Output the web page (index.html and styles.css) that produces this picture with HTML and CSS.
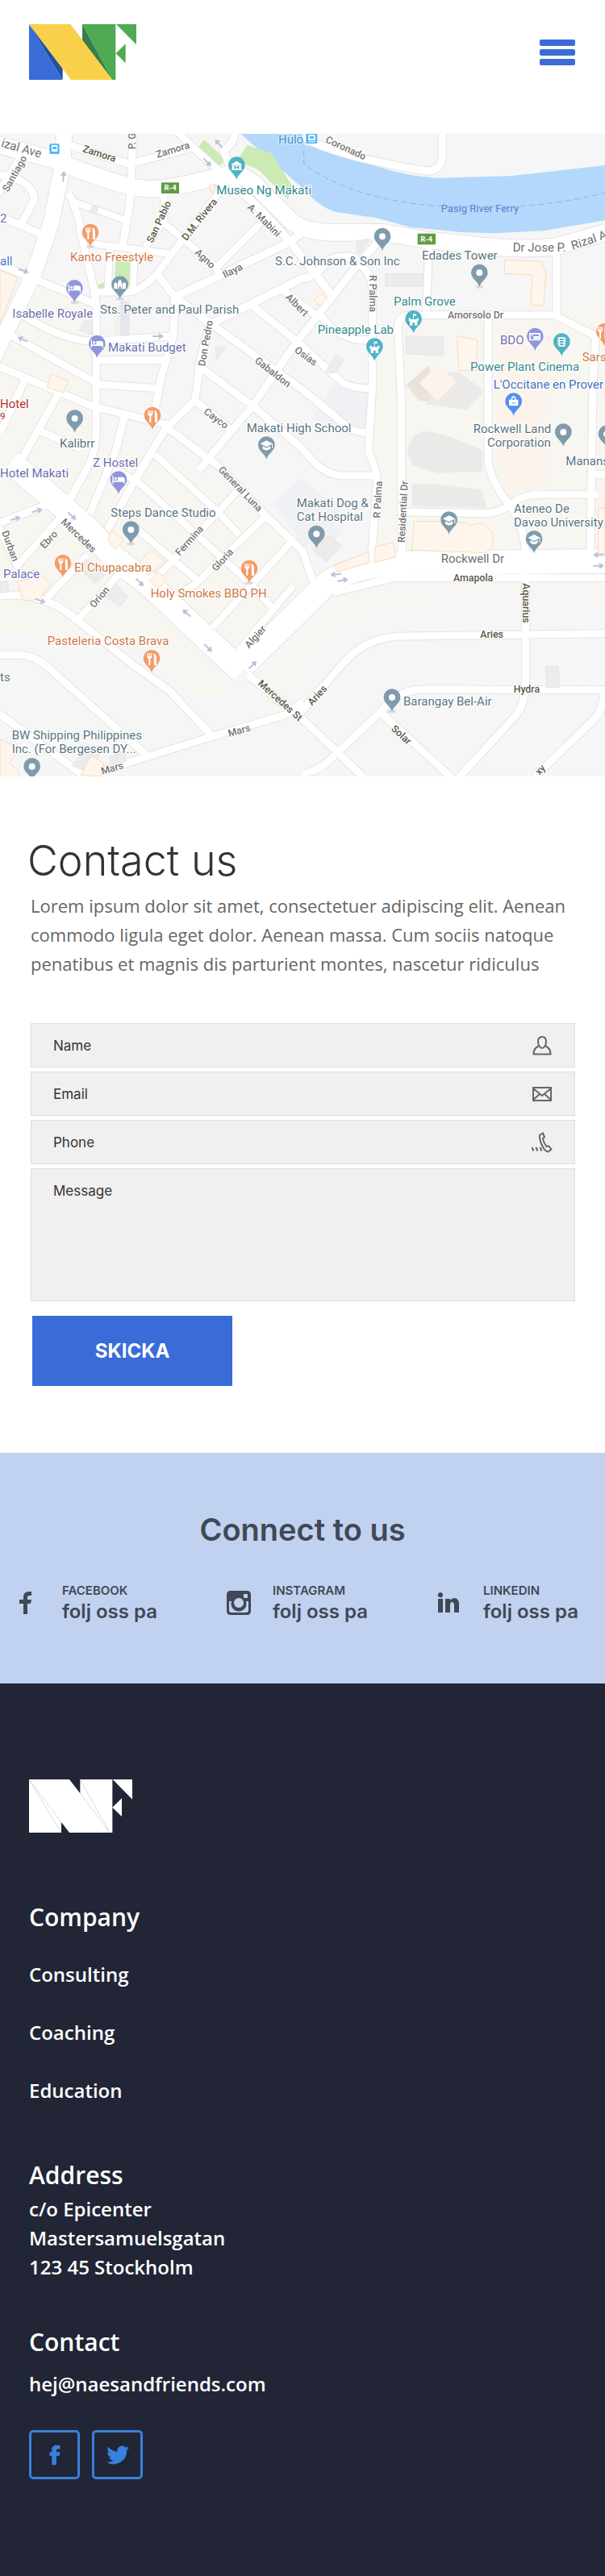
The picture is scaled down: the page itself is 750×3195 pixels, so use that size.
FILE: index.html
```html
<!DOCTYPE html>
<html lang="en">
<head>
<meta charset="utf-8">
<meta name="viewport" content="width=device-width, initial-scale=1">
<title>Contact us</title>
<link rel="stylesheet" href="styles.css">
</head>
<body>
<header class="header">
  <a class="logo" href="#" aria-label="Home">
    <svg viewBox="0 0 399 207" width="133" height="69">
      <path fill="#3a6cd8" d="M0 0v207h125z"/>
      <path fill="#22509c" d="M0 0l125 207v-42z"/>
      <path fill="#387d4a" d="M198 0v60l112 147z"/>
      <path fill="#4eaa53" d="M198 0h124v207h-13z"/>
      <path fill="#f8d049" d="M0 0h154l156 207h-154z"/>
      <path fill="#4eaa53" d="M324 0h75v76zM323 109l36-36v72z"/>
    </svg>
  </a>
  <button class="menu" type="button" aria-label="Menu"><span class="bar"></span><span class="bar"></span><span class="bar"></span></button>
</header>

<main>
<svg class="map" viewBox="0 18 2250 2391" role="img" aria-label="Map">
  <defs>
    <g id="roads">
      <path class="w60" d="M-20 55L200 115Q400 195 500 217Q580 232 680 208L870 165Q930 180 980 240L1080 340Q1130 385 1250 385L1425 385L1600 415L1850 440Q2020 450 2090 432L2250 385"/>
      <path class="w56" d="M240 0L232 140L190 350L125 540L30 740L-30 860"/>
      <path class="w28" d="M255 240Q290 300 300 380L350 600Q360 650 358 740L357 1150Q350 1220 320 1270L255 1385"/>
      <path class="w28" d="M495 0L490 130L482 280L455 445M240 55L480 130L710 70M650 0L720 70L840 180M870 0Q880 50 830 80L870 165"/>
      <path class="w24" d="M270 270L470 340M330 425L640 465M410 440L400 610M500 450L495 600"/>
      <path class="w26" d="M610 240V340L540 440M850 190L680 410L590 530Q530 600 480 607H360M610 350L800 510L820 550M800 520L970 350"/>
      <path class="w32" d="M650 625L1080 420L1130 380M860 200L960 290L1080 420L1235 620M650 625L785 725L1125 555Q1160 560 1220 490Q1290 460 1330 490"/>
      <path class="w28" d="M585 540L650 625L645 760Q630 830 600 920L570 1080M785 720Q740 850 738 920L725 1010L620 1110L545 1230L400 1490M785 725L1125 970L1300 1115Q1330 1130 1380 1130M750 890L940 1030L1125 1190Q1200 1290 1275 1290H1395"/>
      <path class="w28" d="M725 1010L860 1120M1415 410L1325 510L1185 690L1090 810L940 1030L780 1220L740 1270M620 1110L820 1260L980 1430L1125 1570L1170 1700M930 650L1110 795L1270 940Q1300 965 1380 965M1040 590L1170 690M1190 690Q1260 790 1370 785"/>
      <path class="w28" d="M0 170Q120 190 128 260L80 355M85 90L-20 260M0 325L150 390M0 505L110 550L350 650M80 690Q240 790 350 790L640 770M0 745L350 940M350 860H610M360 950L590 965M0 885L340 1030L620 1100M95 930L0 1130M220 980L80 1230M140 1120L300 1190M465 1060L430 1200L335 1430M560 1210L500 1310M430 1270L510 1310"/>
      <path class="w28" d="M1125 30Q1250 100 1560 152Q1640 170 1645 100V0M1310 490Q1385 520 1385 600V960L1370 1200Q1410 1280 1400 1340L1380 1620"/>
      <path class="w28" d="M1595 430L1585 690M2070 440V690M2250 1285H2205M1495 1620L1492 1000L1480 740Q1480 693 1530 692H2060L2215 770L2205 960L2195 1600M1815 700V1210Q1810 1290 1895 1400Q1955 1480 1955 1600M1510 1425L1800 1430Q1850 1430 1895 1400Q1940 1360 2010 1360H2250"/>
      <path class="w92" d="M40 1240L210 1385L330 1490L420 1590L560 1700L900 2020"/>
      <path class="w92" d="M900 2000L1125 1780L1215 1690Q1300 1630 1480 1615L2250 1608"/>
      <path class="w28" d="M1240 1725L1465 1670H2250M1955 1650V2060Q1955 2130 1920 2180L1700 2420M1110 2180L1275 1990Q1350 1900 1475 1888L2250 1877M310 2410L790 2260L1060 2180L1125 2130M920 2030L1125 2195L1350 2410M1125 2400Q1190 2390 1255 2320L1415 2170Q1480 2085 1575 2085L2250 2087M1415 2170L1685 2420M2245 2100Q2240 2160 2215 2190L1990 2410"/>
      <path class="w26" d="M575 1210L800 1415L890 1510M510 1310L930 1690L1020 1790M500 1480L735 1680M880 1350L640 1610L560 1690M990 1440L725 1695L650 1740M1080 1540L790 1855M1090 1700L880 1950"/>
      <path class="w26" d="M-5 1480L65 1630M220 1450L60 1630M325 1585L160 1760M440 1660L290 1825"/>
      <path class="w28" d="M0 1735H80Q200 1750 290 1830L490 1990L630 2090L790 2260M0 1957H80Q140 1960 220 2040L545 2330M0 2178L330 2420M0 1465L170 1400"/>
    </g>
    <path id="pin" d="M0 0C-5-22-31-30-31-54a31 31 0 0 1 62 0C31-30 5-22 0 0z"/>
    <path id="fork" d="M-17-72v12q0 8 6 8v24h6v-24q6 0 6-8v-12h-4v11h-3v-11h-4v11h-3v-11zM8-72q10 3 10 22v22H9z"/>
    <circle id="dot" cy="-53" r="12"/>
    <path id="bed" d="M-23-68h4v18h16v-13h17q9 0 9 9v16h-4v-7h-38v7h-4zM-11-62a5 5 0 1 1-.1 0z"/>
    <path id="cap" d="M-23-58L0-70l23 12L0-46zM-14-49v10q14 11 28 0v-10L0-42zM20-57h3v16h-3z"/>
    <path id="fort" d="M-18-57h6v5h24v-5h6v11h-4v17H4v-10h-8v10h-10v-17h-4zM-2-72h12v7H1v10h-3z"/>
    <path id="arrow" d="M-20-3H3v-9L21 0 3 12V3h-23z"/>
  </defs>
  <rect class="land" y="18" width="2250" height="2391"/>
  <g class="beige">
    <path d="M140 580L355 670V1200L0 1400V760zM1380 970L1480 690L2250 640V1600H1380zM0 1200L600 1200L1100 1540L1125 1780L900 2010L0 1860z"/>
    <path d="M420 1680L900 2090L700 2120zM1250 1740L1465 1700H2250V1740H1600L1300 1830L1000 2160L960 2030z"/>
  </g>
  <path class="hospital" d="M1160 1080L1250 940L1365 980V1110L1290 1120zM1120 1300L1270 1420L1130 1560L1020 1390zM1125 1500L1200 1420L1270 1500L1180 1600z"/>
  <path class="water" d="M895 18H1125L1135 60Q1180 65 1240 92L1375 130Q1500 175 1625 182L1900 175L2250 135V340L2025 378L1845 388L1725 385L1525 365L1395 330L1255 310Q1190 295 1125 220z"/>
  <path class="ferry" d="M1130 80V130Q1300 260 1630 287H1940Q2100 275 2250 238"/>
  <path class="park" d="M920 60L1010 90L1085 210L1070 262L960 150L880 120zM760 40L845 120L810 137L735 70zM430 470h56v115h-60zM365 580l24-10v25h-24z"/>
  <g>
    <use href="#roads" class="casing"/>
    <use href="#roads" class="fill"/>
  </g>
  <g class="grey">
    <path d="M1433 538h140v48h-140zM1510 770l137 5 2 68-140-6zM1210 905l40-65 30 20-35 48zM1328 415l50-7-40 57-10-5zM345 283l20 8-8 27-22-8zM295 750l15-35 35-5v55zM800 810l38 5-32 43z"/>
    <path class="shade" d="M1580 900l130 5 90 70-60 70-150-20zM1515 1205q10-85 80-80l80 20 120 50v80l-170 5-90-30zM1530 1322l80-2 180 20 20 70-275-5z"/>
    <path d="M320 1600l70 60-40 30-60-60zM430 1690l45 50-30 38-55-40zM1170 1570l55-60 45 40-55 60zM2030 2000h47l4 78h-50zM410 2335l55-20 5 40-60 15zM0 1685l28-2 5 40-33 3zM270 2370l40-60 60 20-50 60z"/>
  </g>
  <path class="tower-side" d="M1510 952l85-73 10 60-10 75-40-5z"/>
  <path class="tower" d="M1558 945l75-68 64 65-70 70z"/>
  <path class="church" d="M425 655h35v115h-35z"/><path class="church-side" d="M447 640h35v130h-35z"/>
  <g class="building">
    <path d="M1877 487l140 7v22l14 3-9 138-48-3 6-111-104-5zM1700 770l75 15-2 115-67-2zM1165 640l30-28 20 20-24 26zM0 525l65 30-65 170zM190 910l64 27-18 45-61-20zM778 210l25-4-15 34z"/>
    <path class="mall" d="M1857 740h130l80 60-2 170-38 20v360l-130-10-20-20-20-110zM2225 1320l25-20v110h-25z"/>
    <path d="M1540 1460h75l110 5 30 10 40-10 40 40-8 60-25 12-270-10zM1240 1625l130-52 5 40-120 35zM1395 1555l67-17 10 55-80 20zM2225 1410h25v170h-25z"/>
    <path d="M65 1685l60-15v-30l65 50-45 60-60 5zM415 1495l45 35-30 35-30-35zM560 1565l55 45-65 50-30-50zM590 1650l30 28-32 32-33-30zM0 2270l70 35-35 55 35 30v20H0zM300 2405l40-75 45 30-10 49z"/>
  </g>
  <g class="arrows">
    <use href="#arrow" transform="translate(236 177) rotate(-85)"/><use href="#arrow" transform="translate(88 528) rotate(20)"/><use href="#arrow" transform="translate(84 783) rotate(205)"/><use href="#arrow" transform="translate(588 771)"/><use href="#arrow" transform="translate(771 124) rotate(45)"/><use href="#arrow" transform="translate(813 54) rotate(230)"/><use href="#arrow" transform="translate(57 1450) rotate(-18)"/><use href="#arrow" transform="translate(138 1420) rotate(-18)"/><use href="#arrow" transform="translate(268 1440) rotate(42)"/><use href="#arrow" transform="translate(150 1755) rotate(20)"/><use href="#arrow" transform="translate(520 1687) rotate(45)"/><use href="#arrow" transform="translate(694 1801) rotate(222)"/><use href="#arrow" transform="translate(774 1931) rotate(45)"/><use href="#arrow" transform="translate(940 1994) rotate(-45)"/><use href="#arrow" transform="translate(1249 1657) rotate(175)"/><use href="#arrow" transform="translate(1275 1679) rotate(-12)"/><use href="#arrow" transform="translate(2226 1585) rotate(180)"/><use href="#arrow" transform="translate(2226 1625)"/>
  </g>
  <g class="street">
    <text class="avenue" transform="translate(2 65) rotate(16)">izal Ave</text>
    <text transform="translate(30 236) rotate(-61)">Santiago</text>
    <text transform="translate(585 108) rotate(-17)">Zamora</text>
    <text transform="translate(504 76) rotate(-90)">P. G</text>
    <text transform="translate(918 293) rotate(45)">A. Mabini</text>
    <text transform="translate(722 462) rotate(43)">Agno</text>
    <text transform="translate(836 556) rotate(-27)">Ilaya</text>
    <text transform="translate(762 884) rotate(-80)">Don Pedro</text>
    <text transform="translate(945 866) rotate(38)">Gabaldon</text>
    <text transform="translate(755 1057) rotate(36)">Cayco</text>
    <text transform="translate(1060 628) rotate(45)">Albert</text>
    <text transform="translate(1093 828) rotate(36)">Osias</text>
    <text transform="translate(1208 48) rotate(25)">Coronado</text>
    <text transform="translate(1374 543) rotate(90)">R Palma</text>
    <text x="1665" y="705">Amorsolo Dr</text>
    <text class="avenue" x="1907" y="455">Dr Jose P.</text>
    <text class="avenue" transform="translate(2130 450) rotate(-19)">Rizal A</text>
    <text transform="translate(810 1270) rotate(46)">General Luna</text>
    <text transform="translate(225 1465) rotate(44)">Mercedes</text>
    <text transform="translate(165 1564) rotate(-47)">Ebro</text>
    <text transform="translate(6 1500) rotate(70)">Durban</text>
    <text transform="translate(350 1784) rotate(-49)">Orion</text>
    <text transform="translate(668 1590) rotate(-48)">Fermina</text>
    <text transform="translate(804 1648) rotate(-48)">Gloria</text>
    <text transform="translate(926 1934) rotate(-48)">Algier</text>
    <text transform="translate(852 2262) rotate(-16)">Mars</text>
    <text transform="translate(380 2402) rotate(-16)">Mars</text>
    <text transform="translate(1414 1448) rotate(-87)">R Palma</text>
    <text transform="translate(1505 1540) rotate(-87)">Residential Dr</text>
    <text class="avenue" x="1640" y="1614">Rockwell Dr</text>
  </g>
  <g class="street street-dark">
    <text transform="translate(305 84) rotate(18)">Zamora</text>
    <text transform="translate(567 426) rotate(-65)">San Pablo</text>
    <text transform="translate(694 418) rotate(-52)">D.M. Rivera</text>
    <text x="1686" y="1683">Amapola</text>
    <text transform="translate(1944 1690) rotate(90)">Aquarius</text>
    <text x="1786" y="1893">Aries</text><text x="1910" y="2098">Hydra</text>
    <text transform="translate(1160 2147) rotate(-47)">Aries</text>
    <text transform="translate(1453 2234) rotate(43)">Solar</text>
    <text transform="translate(957 2066) rotate(42)">Mercedes St</text>
    <text transform="translate(2006 2406) rotate(-48)">xy</text>
  </g>
  <text class="ferry-label" x="1640" y="308">Pasig River Ferry</text>
  <g class="shield">
    <rect x="600" y="199" width="66" height="41"/><rect x="1553" y="389" width="67" height="41"/>
    <text x="633" y="229">R-4</text><text x="1586" y="419">R-4</text>
  </g>
  <g class="place slate">
    <text x="372" y="686">Sts. Peter and Paul Parish</text><text x="222" y="1184">Kalibrr</text>
    <text x="917" y="1128">Makati High School</text><text x="1023" y="507">S.C. Johnson &amp; Son Inc</text>
    <text x="1569" y="486">Edades Tower</text><text x="1760" y="1131">Rockwell Land</text><text x="1812" y="1182">Corporation</text>
    <text x="412" y="1442">Steps Dance Studio</text><text x="1103" y="1407">Makati Dog &amp;</text><text x="1103" y="1458">Cat Hospital</text>
    <text x="1911" y="1427">Ateneo De</text><text x="1911" y="1478">Davao University</text><text x="2104" y="1252">Manans</text>
    <text x="1500" y="2146">Barangay Bel-Air</text><text x="44" y="2272">BW Shipping Philippines</text><text x="44" y="2323">Inc. (For Bergesen DY...</text><text x="0" y="2054">ts</text>
  </g>
  <g class="place purple">
    <text x="46" y="702">Isabelle Royale</text><text x="402" y="828">Makati Budget</text><text x="345" y="1257">Z Hostel</text>
    <text x="0" y="1297">Hotel Makati</text><text x="12" y="1672">Palace</text><text x="1860" y="800">BDO</text><text x="0" y="347">2</text>
  </g>
  <g class="place orange">
    <text x="261" y="493">Kanto Freestyle</text><text x="276" y="1647">El Chupacabra</text><text x="560" y="1743">Holy Smokes BBQ PH</text>
    <text x="176" y="1921">Pasteleria Costa Brava</text><text x="2165" y="864">Sars</text>
  </g>
  <g class="place teal">
    <text x="805" y="243">Museo Ng Makati</text><text x="1464" y="658">Palm Grove</text><text x="1181" y="762">Pineapple Lab</text><text x="1749" y="900">Power Plant Cinema</text>
  </g>
  <g class="place blue"><text x="1835" y="965">L'Occitane en Prover</text><text x="0" y="507">all</text></g>
  <g class="place red"><text x="0" y="1038">Hotel</text><text class="small" x="0" y="1080">9</text></g>
  <text class="place transit" x="1035" y="53">Hulo</text>
  <g class="stop">
    <rect x="184" y="55" width="37" height="38" rx="5"/><rect x="1138" y="16" width="42" height="38" rx="5"/>
    <path d="M192 64q0-4 4-4h14q4 0 4 4v20h-22zm4 2v9h14v-9zM1147 22h25v20h-25zm5 5v9h15v-9zM1145 46h28v3h-28z"/>
  </g>
  <g class="shadows">
    <ellipse cx="336" cy="437" rx="15" ry="6"/><ellipse cx="278" cy="646" rx="15" ry="6"/><ellipse cx="446" cy="632" rx="15" ry="6"/><ellipse cx="1783" cy="587" rx="15" ry="6"/><ellipse cx="1458" cy="2167" rx="15" ry="6"/><ellipse cx="487" cy="1544" rx="15" ry="6"/><ellipse cx="927" cy="1689" rx="15" ry="6"/>
  </g>
  <g class="pin-slate">
    <use href="#pin" x="446" y="632"/><use href="#pin" x="278" y="1130"/><use href="#pin" x="991" y="1229"/><use href="#pin" x="1422" y="453"/><use href="#pin" x="1783" y="588"/><use href="#pin" x="2095" y="1181"/><use href="#pin" x="2256" y="1188"/><use href="#pin" x="487" y="1544"/><use href="#pin" x="1177" y="1560"/><use href="#pin" x="1670" y="1508"/><use href="#pin" x="1986" y="1579"/><use href="#pin" x="1458" y="2168"/><use href="#pin" x="119" y="2425"/>
  </g>
  <g class="pin-orange"><use href="#pin" x="336" y="438"/><use href="#pin" x="567" y="1119"/><use href="#pin" x="234" y="1669"/><use href="#pin" x="927" y="1689"/><use href="#pin" x="564" y="2023"/><use href="#pin" x="2248" y="808"/></g>
  <g class="pin-purple"><use href="#pin" x="277" y="646"/><use href="#pin" x="361" y="852"/><use href="#pin" x="441" y="1358"/><use href="#pin" x="1990" y="825"/></g>
  <g class="pin-teal"><use href="#pin" x="880" y="188"/><use href="#pin" x="1538" y="760"/><use href="#pin" x="1393" y="863"/><use href="#pin" x="2089" y="845"/></g>
  <g class="pin-blue"><use href="#pin" x="1910" y="1067"/></g>
  <g class="glyph">
    <use href="#dot" x="278" y="1130"/><use href="#dot" x="1422" y="453"/><use href="#dot" x="1783" y="588"/><use href="#dot" x="2095" y="1181"/><use href="#dot" x="2256" y="1188"/><use href="#dot" x="487" y="1544"/><use href="#dot" x="1177" y="1560"/><use href="#dot" x="1458" y="2168"/><use href="#dot" x="119" y="2425"/>
    <use href="#fork" x="336" y="438"/><use href="#fork" x="567" y="1119"/><use href="#fork" x="234" y="1669"/><use href="#fork" x="927" y="1689"/><use href="#fork" x="564" y="2023"/><use href="#fork" x="2240" y="808"/>
    <use href="#bed" x="277" y="646"/><use href="#bed" x="361" y="852"/><use href="#bed" x="441" y="1358"/>
    <use href="#cap" x="991" y="1229"/><use href="#cap" x="1670" y="1508"/><use href="#cap" x="1986" y="1579"/>
    <use href="#fort" x="1538" y="760"/><use href="#fort" x="1393" y="863"/>
    <path d="M861 131l19-12 19 12v3h-38zM863 136h34v13h3v4h-40v-4h3z"/>
    <path d="M446 559q9 9 8 18v18h-5v-9h-6v9h-5v-18q-1-9 8-18zM424 576l6-7 6 7v19h-12zM456 576l6-7 6 7v19h-12z"/>
    <path fill-rule="evenodd" d="M1968 759h42v28h-42zm5 5v18h32v-18z"/><path d="M1976 766h5v5h-5zM1984 771h20v10h-20z"/>
    <path d="M2077 775h24v34h-24zM2073 777h3v5h-3zM2073 787h3v5h-3zM2073 797h3v5h-3zM2102 777h3v5h-3zM2102 787h3v5h-3zM2102 797h3v5h-3z"/>
    <path fill-rule="evenodd" d="M1893 1007h8q0-13 9-13t9 13h8v23h-34zm12 0h10q0-8-5-8t-5 8zm-2 10q7 10 14 0h-3q-4 5-8 0z"/>
  </g>
  <g class="pin-mark"><path d="M871 149v-12h4l5 6 5-6h4v12h-4v-6l-5 5-5-5v6z"/><path d="M2082 780h14v6h-14zM2082 789h14v6h-14zM2082 798h14v6h-14z"/></g>
</svg>

<section class="contact">
  <h1 class="contact-title">Contact us</h1>
  <p class="contact-text">Lorem ipsum dolor sit amet, consectetuer adipiscing elit. Aenean commodo ligula eget dolor. Aenean massa. Cum sociis natoque penatibus et magnis dis parturient montes, nascetur ridiculus</p>
  <form class="form">
    <div class="field">
      <input class="control" type="text" placeholder="Name" aria-label="Name">
      <svg class="field-icon" viewBox="0 0 28 28"><path d="M14 3c-3.500 0-5 2.500-5 6s2 8 5 8 5-4.500 5-8-1.500-6-5-6zM9.500 14.500C6 16 3.500 19 3.500 24.500h21C24.500 19 22 16 18.500 14.500"/></svg>
    </div>
    <div class="field">
      <input class="control" type="email" placeholder="Email" aria-label="Email">
      <svg class="field-icon" viewBox="0 0 28 28"><path d="M3 6h22v16H3zM3 7l11 9 11-9M3 21l8-7M25 21l-8-7"/></svg>
    </div>
    <div class="field">
      <input class="control" type="tel" placeholder="Phone" aria-label="Phone">
      <svg class="field-icon" viewBox="0 0 28 28"><path d="M11 5l4-2.500 2 4.500-2 2c.5 4 2 7 4.500 10l3-.500 3 4-4 3c-5 0-11-13-10.500-20.500zM1.500 20l2 4.500M6.500 20l2 4.500M11.500 20l2 4.500"/></svg>
    </div>
    <textarea class="control message" placeholder="Message" aria-label="Message"></textarea>
    <button class="send" type="submit">SKICKA</button>
  </form>
</section>

<section class="connect">
  <h2 class="connect-title">Connect to us</h2>
  <div class="networks">
    <a class="network" href="#">
      <svg class="network-icon" viewBox="0 0 30 30"><path d="M9 29V16H4v-5h5V8q0-7 7-7h3v5h-3q-2 0-2 2v3h5l-1 5h-4v13z"/></svg>
      <span class="network-text"><span class="network-name">FACEBOOK</span><span class="network-call">folj oss pa</span></span>
    </a>
    <a class="network" href="#">
      <svg class="network-icon" viewBox="0 0 30 30"><path fill-rule="evenodd" d="M5 0h20q5 0 5 5v20q0 5-5 5H5q-5 0-5-5V5q0-5 5-5zM22 4q-1 0-1 1v3q0 1 1 1h3q1 0 1-1V5q0-1-1-1zM3 13v11q0 3 3 3h18q3 0 3-3V13h-3a9.500 9.500 0 1 1-18 0zM15 9a6 6 0 1 0 .1 0z"/></svg>
      <span class="network-text"><span class="network-name">INSTAGRAM</span><span class="network-call">folj oss pa</span></span>
    </a>
    <a class="network" href="#">
      <svg class="network-icon" viewBox="0 0 30 30"><path d="M1 10h6v17H1zM4 2a3.200 3.200 0 1 1-.1 0zM10 10h6v2q2-3 5-3 6 0 6 8v10h-6v-9q0-4-2.500-4T16 18v9h-6z"/></svg>
      <span class="network-text"><span class="network-name">LINKEDIN</span><span class="network-call">folj oss pa</span></span>
    </a>
  </div>
</section>
</main>

<footer class="footer">
  <a class="footer-logo" href="#" aria-label="Home">
    <svg viewBox="0 0 384 198" width="128" height="66">
      <path fill="#fff" d="M0 0h150l40 52V0h120v198H150l-30-39v39H0zM311 0h73v74zM310 104l35-34v68z"/>
      <path fill="none" stroke="#c9c9c9" stroke-width="2" d="M120 198L0 0l120 159M190 52l110 146L190 0"/>
    </svg>
  </a>
  <nav class="company">
    <h2 class="footer-title">Company</h2>
    <a class="footer-link" href="#">Consulting</a>
    <a class="footer-link" href="#">Coaching</a>
    <a class="footer-link" href="#">Education</a>
  </nav>
  <section class="address">
    <h2 class="footer-title">Address</h2>
    <address class="lines">c/o Epicenter<br>Mastersamuelsgatan<br>123 45 Stockholm</address>
  </section>
  <section class="mail">
    <h2 class="footer-title">Contact</h2>
    <a class="footer-link" href="mailto:hej@naesandfriends.com">hej@naesandfriends.com</a>
  </section>
  <div class="social">
    <a class="social-link" href="#" aria-label="Facebook"><svg viewBox="0 0 30 30" width="28" height="28"><path d="M11 28V16H8v-5h3V8q0-6 6-6h5v5h-3q-2 0-2 2v2h5l-1 5h-4v12z"/></svg></a>
    <a class="social-link" href="#" aria-label="Twitter"><svg viewBox="0 0 24 24" width="28" height="28"><path d="M24 4.600a10 10 0 0 1-2.800.8 5 5 0 0 0 2.100-2.700 10 10 0 0 1-3.100 1.200 4.900 4.900 0 0 0-8.400 4.500A14 14 0 0 1 1.700 3.200a4.900 4.900 0 0 0 1.500 6.500 4.900 4.900 0 0 1-2.200-.6 4.900 4.900 0 0 0 3.900 4.900 5 5 0 0 1-2.200.1 4.900 4.900 0 0 0 4.600 3.400A10 10 0 0 1 0 19.500a14 14 0 0 0 21.500-12.400A10 10 0 0 0 24 4.600z"/></svg></a>
  </div>
</footer>
</body>
</html>
```
FILE: styles.css
```css
* { box-sizing: border-box; }
body { margin: 0; background: #fff; font-family: "Open Sans", "Noto Sans", sans-serif; color: #666; }
h1, h2, p { margin: 0; }
a { color: inherit; text-decoration: none; }
svg { display: block; }
button, input, textarea { font: inherit; }

.header { display: flex; justify-content: space-between; align-items: flex-start; padding: 30px 37px 67px 36px; }
.menu { display: flex; flex-direction: column; gap: 4px; margin-top: 19px; padding: 0; border: 0; background: none; cursor: pointer; }
.bar { width: 44px; height: 8px; border-radius: 2px; background: #3a6cd8; }

.map { width: 100%; height: auto; font-family: Roboto, sans-serif; }
.land { fill: #f6f6f6; }
.beige { fill: #f8f6f1; }
.hospital { fill: #f0f1f4; }
.water { fill: #b3d8fc; }
.park { fill: #cbeab4; }
.ferry { fill: none; stroke: #8fb4e6; stroke-width: 3; stroke-dasharray: 22 12; }
#roads { fill: none; stroke-linejoin: round; }
#roads path { stroke-width: calc((var(--road) + var(--edge)) * 1px); }
.w24 { --road: 24; }
.w26 { --road: 25; }
.w28 { --road: 27; }
.w32 { --road: 29; }
.w56 { --road: 58; }
.w60 { --road: 62; }
.w92 { --road: 88; }
.casing { --edge: 6; stroke: #e4e4e4; }
.fill { --edge: 0; stroke: #fff; }
.grey { fill: #ececec; stroke: #e0e0e0; stroke-width: 2; }
.shade { fill: #ebeae8; stroke: none; }
.tower { fill: #fcf4ec; }
.tower-side { fill: #e9e2dd; }
.church { fill: #f4f2ea; }
.church-side { fill: #e6e6f1; }
.building { fill: #fef5ec; stroke: #fbdcb9; stroke-width: 3; }
.mall { fill: #fcf4ec; stroke: none; }
.arrows { fill: #bcc1da; }
.street { font-size: 37px; fill: #757575; font-weight: 500; }
.street-dark { fill: #5c5848; }
.street text, .place, .ferry-label { stroke: #fff; stroke-width: 7px; stroke-linejoin: round; paint-order: stroke; }
.street .avenue { font-size: 45px; fill: #6c6f72; font-weight: 400; }
.ferry-label { font-size: 39px; fill: #5580cc; stroke: #b3d8fc; }
.shield { fill: #629b41; font-size: 28px; font-weight: 700; text-anchor: middle; }
.shield text { fill: #fff; }
.place { font-size: 45px; }
.small { font-size: 35px; }
.slate { fill: #5b7583; }
.purple { fill: #6a70b0; }
.orange { fill: #cf7848; }
.teal { fill: #328b90; }
.blue { fill: #4470c6; }
.red { fill: #b52f2d; }
.transit { fill: #3b94d4; stroke: #d9ebfd; }
.stop { fill: #4fb8f6; }
.stop path { fill: #fff; fill-rule: evenodd; }
.shadows { fill: #dcdcdc; }
.pin-slate { fill: #7f9bac; }
.pin-orange { fill: #f39c69; }
.pin-purple { fill: #8f97dc; }
.pin-teal, .pin-mark { fill: #4fb3c4; }
.pin-blue { fill: #5290f3; }
.glyph { fill: #fff; }

.contact { padding: 68px 37px 83px 38px; }
.contact-title { margin-left: -4px; font: 300 52px/74px Inter, sans-serif; color: #333; }
.contact-text { margin-bottom: 56px; font-size: 22px; line-height: 36px; }
.form { display: flex; flex-direction: column; gap: 5px; }
.field { display: flex; align-items: center; height: 55px; padding-right: 26px; border: 1px solid #dedede; background: #f0f0f0; }
.control { flex: 1; min-width: 0; padding: 0 0 0 27px; border: 0; background: none; font: 400 17px/24px Inter, sans-serif; color: #333; outline-color: #3a6cd8; }
.control::placeholder { color: #333; opacity: 1; }
.field-icon { width: 28px; height: 28px; fill: none; stroke: #666; stroke-width: 2; }
.message { flex: none; height: 165px; padding: 15px 27px; border: 1px solid #dedede; background: #f0f0f0; resize: none; }
.send { align-self: flex-start; width: 248px; height: 87px; margin: 13px 0 0 2px; border: 0; background: #3a6cd8; color: #fff; font: 700 24px/32px Inter, sans-serif; cursor: pointer; }

.connect { padding: 71px 0 74px; background: #c1d2f0; color: #414855; font-family: Inter, sans-serif; }
.connect-title { font-size: 38px; line-height: 48px; font-weight: 600; text-align: center; }
.networks { display: flex; justify-content: space-between; margin-top: 40px; padding: 0 33px 0 20px; }
.network { display: flex; align-items: center; gap: 27px; }
.network-icon { width: 30px; height: 30px; fill: currentColor; }
.network-text { display: flex; flex-direction: column; font-weight: 600; }
.network-name { font-size: 15px; line-height: 23px; }
.network-call { font-size: 24px; line-height: 30px; }

.footer { padding: 119px 36px 120px; background: #212536; color: #fff; font-weight: 600; }
.footer-title { font-size: 30px; line-height: 40px; font-weight: 600; }
.footer-link { display: block; font-size: 24px; line-height: 36px; }
.company { display: flex; flex-direction: column; gap: 36px; margin-top: 85px; }
.company .footer-title { margin-bottom: -3px; }
.address { margin-top: 67px; }
.lines { margin-top: 4px; font-size: 24px; line-height: 36px; font-style: normal; }
.mail { display: flex; flex-direction: column; gap: 14px; margin-top: 55px; }
.social { display: flex; gap: 15px; margin-top: 39px; }
.social-link { display: flex; align-items: center; justify-content: center; width: 63px; height: 61px; border: 3px solid #3880dc; border-radius: 5px; fill: #3880dc; }
```
